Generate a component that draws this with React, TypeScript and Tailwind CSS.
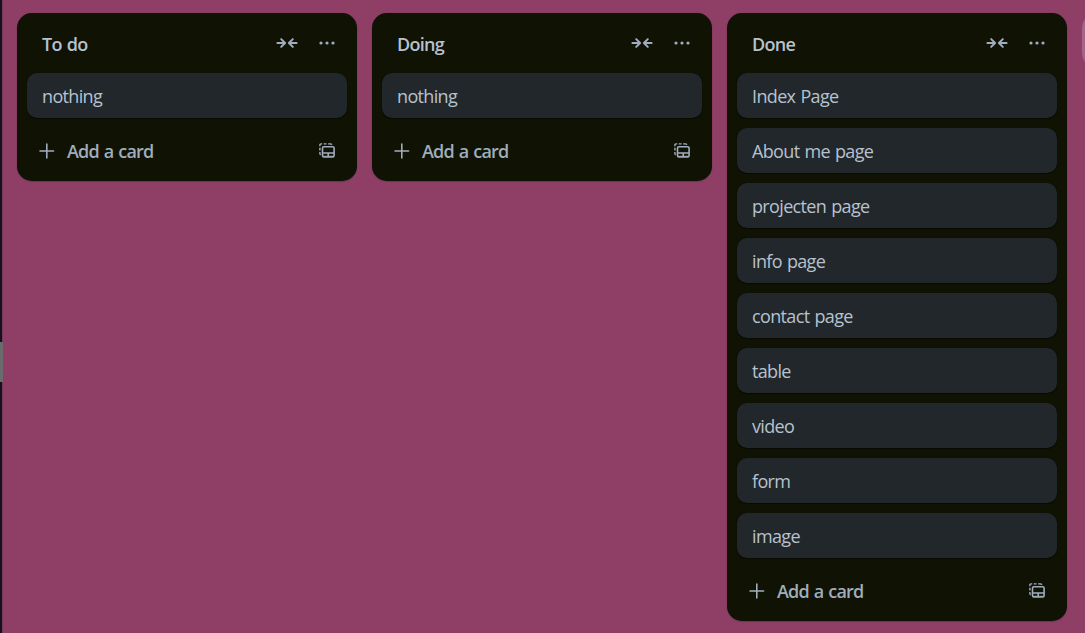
interface BoardList {
  title: string;
  cards: string[];
}

const lists: BoardList[] = [
  { title: "To do", cards: ["nothing"] },
  { title: "Doing", cards: ["nothing"] },
  {
    title: "Done",
    cards: [
      "Index Page",
      "About me page",
      "projecten page",
      "info page",
      "contact page",
      "table",
      "video",
      "form",
      "image",
    ],
  },
];

function CollapseIcon() {
  return (
    <svg width="22" height="12" viewBox="0 0 22 12" fill="none" stroke="currentColor" strokeWidth="2" strokeLinecap="round" strokeLinejoin="round">
      <path d="M1.4 6H9M5.2 2.1L9.1 6L5.2 9.9" />
      <path d="M20.6 6H13M16.8 2.1L12.9 6L16.8 9.9" />
    </svg>
  );
}

function DotsIcon() {
  return (
    <svg width="16" height="4" viewBox="0 0 16 4" fill="currentColor">
      <circle cx="2" cy="2" r="1.6" />
      <circle cx="8" cy="2" r="1.6" />
      <circle cx="14" cy="2" r="1.6" />
    </svg>
  );
}

function PlusIcon() {
  return (
    <svg width="16" height="16" viewBox="0 0 16 16" fill="none" stroke="currentColor" strokeWidth="1.6" strokeLinecap="round">
      <path d="M7.8 1V15M1 8H14.6" />
    </svg>
  );
}

function TemplateIcon() {
  return (
    <svg width="16" height="15" viewBox="0 0 16 15" fill="none" stroke="currentColor">
      <path d="M0.9 3.2V2Q0.9 0.9 2 0.9H3.2M4.7 0.9H7.6M9.1 0.9H11.2Q12.6 0.9 12.8 1.8M0.9 4.8V7.4M0.9 9V10.6Q0.9 11.6 1.8 11.8" strokeWidth="1.4" />
      <rect x="3.5" y="3.7" width="11.6" height="10.3" rx="1.4" strokeWidth="1.6" />
      <path d="M3.5 10H15.1M9.2 10V13.4" strokeWidth="1.6" />
      <path d="M4 13.3H14.6" strokeWidth="1" />
    </svg>
  );
}

function List({ list }: { list: BoardList }) {
  return (
    <section className="flex w-[340px] shrink-0 flex-col rounded-[15px] bg-[#101204] px-2.5 shadow-[0_1px_1px_#091e4240,0_0_1px_#091e424f]">
      <header className="flex h-[60px] items-center pr-3 pl-[15px]">
        <h2 className="flex-1 pt-px text-[18px] leading-6 font-semibold tracking-[-0.7px] text-[#b6c2cf] [word-spacing:1px]">{list.title}</h2>
        <div className="flex items-center gap-[21px] text-[#9fadbc]">
          <CollapseIcon />
          <DotsIcon />
        </div>
      </header>
      <ul className="flex flex-col gap-2.5">
        {list.cards.map((card) => (
          <li
            key={card}
            className="flex h-[45px] items-center rounded-[10px] bg-[#22272b] px-[15px] text-[18px] leading-6 tracking-[-0.65px] text-[#b6c2cf] shadow-[0_1px_1px_#03040480,0_0_1px_#03040480] [word-spacing:1px]"
          >
            {card}
          </li>
        ))}
      </ul>
      <footer className="flex h-[63px] items-center px-3 pt-0.5 text-[#9fadbc]">
        <PlusIcon />
        <span className="ml-3 flex-1 text-[18px] leading-6 font-semibold tracking-[-0.8px] [word-spacing:1px]">Add a card</span>
        <TemplateIcon />
      </footer>
    </section>
  );
}

export default function App() {
  return (
    <div className="flex h-[633px] w-[1085px] overflow-hidden bg-[#8f3f65] font-['Open_Sans','Noto_Sans',sans-serif]">
      <aside className="flex w-[3px] shrink-0 flex-col border-r border-[#74395b] bg-[#190f1d] pt-[342px]">
        <div className="-mr-px h-10 shrink-0 bg-[#6b6b6d]" />
      </aside>
      <main className="flex flex-1 items-start gap-[15px] overflow-hidden pt-[13px] pl-3.5">
        {lists.map((list) => (
          <List key={list.title} list={list} />
        ))}
        <div className="h-[55px] w-[340px] shrink-0 rounded-[15px] bg-[#a5658a]" />
      </main>
    </div>
  );
}
